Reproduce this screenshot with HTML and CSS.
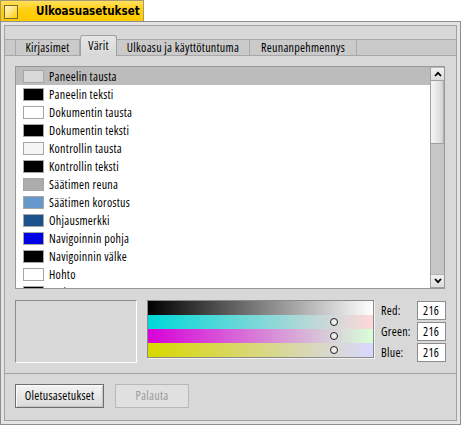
FILE: index.html
```html
<!DOCTYPE html>
<html lang="fi">
<head>
<meta charset="utf-8">
<title>Ulkoasuasetukset</title>
<link rel="stylesheet" href="styles.css">
</head>
<body>
<div class="titletab">
  <span class="closebox"></span>
  <span class="title">Ulkoasuasetukset</span>
</div>
<div class="window">
  <div class="frame-inner">
    <div class="tabview">
      <div class="tabbar">
        <div class="tab-lead"></div>
        <div class="tab w1">Kirjasimet</div>
        <div class="tab active w2">Värit</div>
        <div class="tab w3">Ulkoasu ja käyttötuntuma</div>
        <div class="tab w4">Reunanpehmennys</div>
      </div>
      <div class="panel">
        <div class="listbox">
          <div class="list">
            <div class="row selected"><span class="swatch" style="background:#d8d8d8"></span>Paneelin tausta</div>
            <div class="row"><span class="swatch" style="background:#000000"></span>Paneelin teksti</div>
            <div class="row"><span class="swatch" style="background:#ffffff"></span>Dokumentin tausta</div>
            <div class="row"><span class="swatch" style="background:#000000"></span>Dokumentin teksti</div>
            <div class="row"><span class="swatch" style="background:#f5f5f5"></span>Kontrollin tausta</div>
            <div class="row"><span class="swatch" style="background:#000000"></span>Kontrollin teksti</div>
            <div class="row"><span class="swatch" style="background:#acacac"></span>Säätimen reuna</div>
            <div class="row"><span class="swatch" style="background:#6698cb"></span>Säätimen korostus</div>
            <div class="row"><span class="swatch" style="background:#1b528c"></span>Ohjausmerkki</div>
            <div class="row"><span class="swatch" style="background:#0000e5"></span>Navigoinnin pohja</div>
            <div class="row"><span class="swatch" style="background:#000000"></span>Navigoinnin välke</div>
            <div class="row"><span class="swatch" style="background:#ffffff"></span>Hohto</div>
            <div class="row"><span class="swatch" style="background:#000000"></span>Varjo</div>
          </div>
          <div class="scrollbar">
            <div class="sb-btn"><svg width="8" height="6" viewBox="0 0 8 6"><polyline points="1,5 4,1.8 7,5" fill="none" stroke="#000" stroke-width="1.8"/></svg></div>
            <div class="sb-thumb"></div>
            <div class="sb-track"></div>
            <div class="sb-btn"><svg width="8" height="6" viewBox="0 0 8 6"><polyline points="1,1 4,4.2 7,1" fill="none" stroke="#000" stroke-width="1.8"/></svg></div>
          </div>
        </div>
        <div class="colorrow">
          <div class="preview"></div>
          <div class="slider">
            <div class="band band-gray"></div>
            <div class="band band-red"><span class="marker"></span></div>
            <div class="band band-green"><span class="marker"></span></div>
            <div class="band band-blue"><span class="marker"></span></div>
          </div>
          <div class="rgb">
            <span class="lbl">Red:</span><span class="field">216</span>
            <span class="lbl">Green:</span><span class="field">216</span>
            <span class="lbl">Blue:</span><span class="field">216</span>
          </div>
        </div>
      </div>
    </div>
    <div class="buttons">
      <div class="btn btn-default">Oletusasetukset</div>
      <div class="btn btn-disabled">Palauta</div>
    </div>
  </div>
</div>
</body>
</html>
```
FILE: styles.css
```css
* { box-sizing: border-box; }
html, body { margin: 0; padding: 0; background: #ffffff; }
body {
  width: 461px;
  height: 425px;
  overflow: hidden;
  font-family: "Open Sans", "DejaVu Sans", sans-serif;
  font-stretch: condensed;
  font-size: 12px;
  letter-spacing: 0.28px;
  color: #000;
}

/* title tab */
.titletab {
  width: 144px;
  height: 21px;
  background: linear-gradient(to bottom, #ffe060 0%, #ffcf10 45%, #ffcb00 100%);
  border: 1px solid #a89a6a;
  border-bottom: none;
  display: flex;
  align-items: center;
}
.closebox {
  width: 14px;
  height: 14px;
  margin-left: 3px;
  margin-top: 2px;
  border: 1px solid #7c6a2a;
  background: linear-gradient(135deg, #fff8d0 0%, #ffe680 45%, #ffcc00 100%);
}
.title {
  margin-left: 18px;
  font-family: "DejaVu Sans Condensed", "Open Sans", sans-serif;
  font-stretch: normal;
  font-weight: bold;
  font-size: 11.5px;
  letter-spacing: 0;
  line-height: 21px;
}

/* window frame */
.window {
  width: 461px;
  height: 404px;
  border: 1px solid #8e8e8e;
  padding: 3px;
  background: #e4e4e4;
}
.frame-inner {
  height: 100%;
  border: 1px solid #a2a2a2;
  background: #d8d8d8;
  display: flex;
  flex-direction: column;
}

/* tab view */
.tabview { padding-top: 13px; }
.tabbar {
  display: flex;
  height: 17px;
  border-top: 1px solid #a8a8a8;
  border-bottom: 1px solid #a8a8a8;
  background: #cacaca;
}
.tab-lead {
  width: 11px;
  height: 15px;
  border-right: 1px solid #aaaaaa;
}
.tab {
  height: 15px;
  line-height: 15px;
  text-align: center;
  white-space: nowrap;
  border-right: 1px solid #aaaaaa;
}
.w1 { width: 64px; }
.w2 { width: 37px; }
.w3 { width: 133px; }
.w4 { width: 107px; }
.tab.active {
  height: 21px;
  margin-top: -5px;
  line-height: 19px;
  border: 1px solid #a0a0a0;
  border-bottom: none;
  border-radius: 3px 3px 0 0;
  background: linear-gradient(to bottom, #e6e6e6, #d8d8d8);
}

.panel {
  padding: 10px 10px 10px 10px;
  border-bottom: 1px solid #a4a4a4;
}

/* list */
.listbox {
  height: 223px;
  margin-right: 1px;
  border: 1px solid #989898;
  background: #fff;
  display: flex;
}
.list {
  flex: 1;
  overflow: hidden;
}
.row {
  height: 18px;
  display: flex;
  align-items: center;
  padding-left: 7px;
  white-space: nowrap;
}
.row.selected { background: #bcbcbc; }
.swatch {
  width: 21px;
  height: 13px;
  margin-right: 5px;
  border: 1px solid #a6a6a6;
  flex: none;
}
.scrollbar {
  width: 14px;
  border-left: 1px solid #a0a0a0;
  display: flex;
  flex-direction: column;
}
.sb-btn {
  height: 14px;
  background: linear-gradient(to bottom, #f2f2f2, #dcdcdc);
  border-top: 1px solid #b4b4b4;
  border-bottom: 1px solid #a0a0a0;
  display: flex;
  align-items: center;
  justify-content: center;
}
.sb-thumb {
  height: 63px;
  background: linear-gradient(to right, #f6f6f6, #e0e0e0 70%, #d0d0d0);
  border-bottom: 1px solid #a0a0a0;
  border-right: 1px solid #b0b0b0;
}
.sb-track {
  flex: 1;
  background: #c6c6c6;
}

/* colour area */
.colorrow {
  display: flex;
  align-items: flex-start;
  margin-top: 11px;
}
.preview {
  width: 122px;
  height: 63px;
  border: 1px solid;
  border-color: #8c8c8c #ffffff #ffffff #8c8c8c;
  background: #d8d8d8;
}
.slider {
  width: 227px;
  height: 58px;
  margin-left: 10px;
  border: 1px solid #8a8a8a;
  box-shadow: 1px 1px 0 #f2f2f2;
}
.band {
  height: 14px;
  position: relative;
}
.band-gray  { background: linear-gradient(to right, #000000, #ffffff); }
.band-red   { background: linear-gradient(to right, rgb(0,216,216), rgb(216,216,216) 84.7%, rgb(255,216,216)); }
.band-green { background: linear-gradient(to right, rgb(216,0,216), rgb(216,216,216) 84.7%, rgb(216,255,216)); }
.band-blue  { background: linear-gradient(to right, rgb(216,216,0), rgb(216,216,216) 84.7%, rgb(216,216,255)); }
.marker {
  position: absolute;
  left: 182px;
  top: 3px;
  width: 8px;
  height: 8px;
  border-radius: 50%;
  border: 1px solid #202020;
  background: #ececec;
}
.rgb {
  margin-left: 7px;
  margin-top: 1px;
  display: grid;
  grid-template-columns: 36px 29px;
  grid-auto-rows: 19px;
  row-gap: 2px;
  align-items: center;
}
.lbl { white-space: nowrap; }
.field {
  height: 19px;
  line-height: 17px;
  padding-left: 5px;
  border: 1px solid #8c8c8c;
  background: #fff;
}

/* buttons */
.buttons {
  display: flex;
  padding: 10px 10px;
  gap: 11px;
}
.btn {
  height: 24px;
  line-height: 22px;
  text-align: center;
  white-space: nowrap;
}
.btn-default {
  width: 89px;
  border: 1px solid #6e6e6e;
  box-shadow: inset 1px 1px 0 #fafafa, inset -1px -1px 0 #c4c4c4;
  background: linear-gradient(to bottom, #f4f4f4, #dadada);
}
.btn-disabled {
  width: 74px;
  border: 1px solid #b8b8b8;
  background: #e0e0e0;
  color: #9a9a9a;
}
```
